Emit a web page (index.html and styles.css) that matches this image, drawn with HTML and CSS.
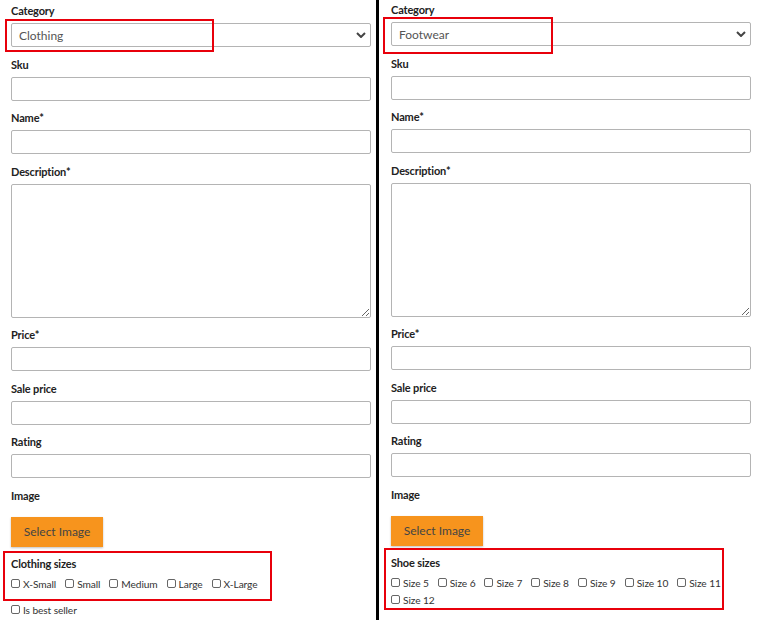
FILE: index.html
```html
<!DOCTYPE html>
<html>
<head>
<meta charset="utf-8">
<link rel="stylesheet" href="styles.css">
</head>
<body>
<div class="page">
  <form class="panel panel-left">
    <div class="field">
      <label class="lbl">Category</label>
      <div class="select-wrap">
        <div class="select">Clothing</div>
        <svg class="chev" width="10" height="6" viewBox="0 0 10 6"><path d="M1 1 L5 5 L9 1" fill="none" stroke="#444" stroke-width="2"/></svg>
        <div class="mark mark-sel-l"></div>
      </div>
    </div>
    <div class="field"><label class="lbl">Sku</label><input class="inp" type="text"></div>
    <div class="field"><label class="lbl">Name*</label><input class="inp" type="text"></div>
    <div class="field"><label class="lbl">Description*</label><textarea class="ta"></textarea></div>
    <div class="field"><label class="lbl">Price*</label><input class="inp" type="text"></div>
    <div class="field"><label class="lbl">Sale price</label><input class="inp" type="text"></div>
    <div class="field"><label class="lbl">Rating</label><input class="inp" type="text"></div>
    <div class="field"><label class="lbl">Image</label><button type="button" class="btn">Select Image</button></div>
    <div class="sizes sizes-l">
      <div class="lbl">Clothing sizes</div>
      <div class="checks">
        <label class="chk"><input type="checkbox"><span>X-Small</span></label>
        <label class="chk"><input type="checkbox"><span>Small</span></label>
        <label class="chk"><input type="checkbox"><span>Medium</span></label>
        <label class="chk"><input type="checkbox"><span>Large</span></label>
        <label class="chk"><input type="checkbox"><span>X-Large</span></label>
      </div>
      <div class="mark mark-sz-l"></div>
    </div>
    <div class="checks best">
      <label class="chk"><input type="checkbox"><span>Is best seller</span></label>
    </div>
  </form>
  <div class="divider"></div>
  <form class="panel panel-right">
    <div class="field">
      <label class="lbl">Category</label>
      <div class="select-wrap">
        <div class="select">Footwear</div>
        <svg class="chev" width="10" height="6" viewBox="0 0 10 6"><path d="M1 1 L5 5 L9 1" fill="none" stroke="#444" stroke-width="2"/></svg>
        <div class="mark mark-sel-r"></div>
      </div>
    </div>
    <div class="field"><label class="lbl">Sku</label><input class="inp" type="text"></div>
    <div class="field"><label class="lbl">Name*</label><input class="inp" type="text"></div>
    <div class="field"><label class="lbl">Description*</label><textarea class="ta"></textarea></div>
    <div class="field"><label class="lbl">Price*</label><input class="inp" type="text"></div>
    <div class="field"><label class="lbl">Sale price</label><input class="inp" type="text"></div>
    <div class="field"><label class="lbl">Rating</label><input class="inp" type="text"></div>
    <div class="field"><label class="lbl">Image</label><button type="button" class="btn">Select Image</button></div>
    <div class="sizes sizes-r">
      <div class="lbl">Shoe sizes</div>
      <div class="checks">
        <label class="chk"><input type="checkbox"><span>Size 5</span></label>
        <label class="chk"><input type="checkbox"><span>Size 6</span></label>
        <label class="chk"><input type="checkbox"><span>Size 7</span></label>
        <label class="chk"><input type="checkbox"><span>Size 8</span></label>
        <label class="chk"><input type="checkbox"><span>Size 9</span></label>
        <label class="chk"><input type="checkbox"><span>Size 10</span></label>
        <label class="chk"><input type="checkbox"><span>Size 11</span></label>
        <label class="chk"><input type="checkbox"><span>Size 12</span></label>
      </div>
      <div class="mark mark-sz-r"></div>
    </div>
  </form>
</div>
</body>
</html>
```
FILE: styles.css
```css
* { box-sizing: border-box; }
html, body { margin: 0; padding: 0; background: #fff; }
body {
  font-family: Lato, "Open Sans", sans-serif;
  color: #222;
  width: 774px;
  height: 620px;
  overflow: hidden;
}
.page {
  display: flex;
  height: 620px;
}
.panel {
  display: flex;
  flex-direction: column;
}
.panel-left {
  width: 376px;
  padding: 2px 0 0 11px;
}
.panel-right {
  width: 395px;
  padding: 1px 0 0 12px;
}
.divider {
  width: 3px;
  background: #000;
  height: 620px;
}
.field {
  display: flex;
  flex-direction: column;
  width: 360px;
  margin-bottom: 8.5px;
}
.lbl {
  font-size: 11px;
  font-weight: 700;
  letter-spacing: -0.15px;
  line-height: 17.5px;
  height: 16px;
  margin-bottom: 5px;
  color: #222;
}
.select-wrap {
  position: relative;
  width: 360px;
}
.select {
  height: 24px;
  border: 1px solid #b4b4b4;
  border-radius: 2px;
  padding-left: 7px;
  font-size: 12px;
  line-height: 24px;
  color: #555;
}
.chev {
  position: absolute;
  right: 5px;
  top: 9px;
}
.inp {
  display: block;
  width: 360px;
  height: 24px;
  border: 1px solid #b4b4b4;
  border-radius: 2px;
  margin: 0;
  padding: 0 6px;
  font: inherit;
}
.ta {
  display: block;
  width: 360px;
  height: 134px;
  border: 1px solid #b4b4b4;
  border-radius: 2px;
  margin: 0;
  resize: vertical;
  font: inherit;
}
.btn {
  align-self: flex-start;
  margin-top: 9px;
  width: 92px;
  height: 30px;
  border: none;
  border-radius: 0;
  background: #f7941d;
  color: #444;
  font-family: Lato, sans-serif;
  font-size: 12px;
  box-shadow: 0 1px 2px rgba(0,0,0,0.25);
  padding: 0;
}
.sizes {
  position: relative;
  width: 360px;
}
.sizes .lbl { margin-bottom: 4px; display: block; }
.checks {
  display: flex;
  flex-wrap: wrap;
  column-gap: 9px;
}
.chk {
  display: flex;
  align-items: center;
  gap: 3px;
  height: 17px;
  font-size: 10.2px;
  letter-spacing: -0.1px;
  color: #333;
}
.chk span { padding-top: 1px; }
.chk input {
  appearance: none;
  -webkit-appearance: none;
  width: 9px;
  height: 9px;
  margin: 0;
  border: 1px solid #666;
  border-radius: 2px;
  background: #fff;
}
.best { margin-top: 8.5px; }
.mark {
  position: absolute;
  border: 2px solid #e8000b;
  pointer-events: none;
}
.mark-sel-l { left: -6px; top: -4px; width: 209px; height: 33px; }
.mark-sel-r { left: -8px; top: -5px; width: 170px; height: 37px; }
.mark-sz-l { left: -8px; top: -4px; width: 269px; height: 50px; }
.mark-sz-r { left: -7px; top: -6px; width: 340px; height: 62px; }
```
